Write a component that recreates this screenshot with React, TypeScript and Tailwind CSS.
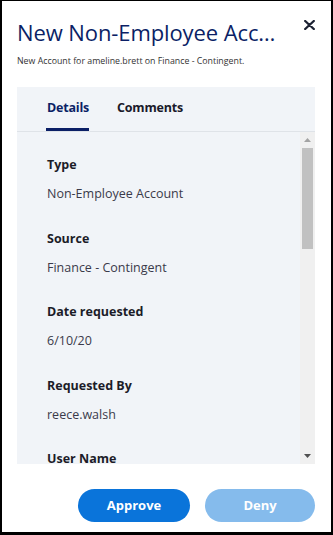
import React from "react";

const items = [
  { label: "Type", value: "Non-Employee Account" },
  { label: "Source", value: "Finance - Contingent" },
  { label: "Date requested", value: "6/10/20" },
  { label: "Requested By", value: "reece.walsh" },
  { label: "User Name", value: "ameline.brett" },
];

export default function App() {
  return (
    <div
      className="w-[333px] h-[535px] bg-white border-black border-l-2 border-r-2 border-t border-b-[3px] flex flex-col overflow-hidden"
      style={{ fontFamily: '"Open Sans", "Noto Sans", Arial, sans-serif' }}
    >
      <div className="flex items-start justify-between pl-[15px] pr-[16px] mt-[17px]">
        <div className="w-[264px] truncate text-[22px] leading-[28px] text-[#0b1f66] tracking-[-0.1px]">
          New Non-Employee Account Request
        </div>
        <svg width="11" height="10" viewBox="0 0 11 10" className="mt-[2px]">
          <path d="M1.2 1 L9.8 9 M9.8 1 L1.2 9" stroke="#1c2233" strokeWidth="2.3" strokeLinecap="round" />
        </svg>
      </div>
      <div className="pl-[15px] mt-[9px] text-[8.8px] leading-[12px] text-[#333]">
        New Account for ameline.brett on Finance - Contingent.
      </div>
      <div className="ml-[15px] mr-[16px] mt-[20px] h-[377px] bg-[#f1f4f8] flex flex-col">
        <div className="flex gap-[28px] pl-[30px] border-b border-[#dfe3e8] h-[45px]">
          <div className="flex flex-col pt-[11px]">
            <div className="text-[12.5px] leading-[20px] font-bold text-[#0b1f66] tracking-[-0.2px]">Details</div>
            <div className="mt-auto h-[3px] bg-[#0b1f66] -ml-[1px]"></div>
          </div>
          <div className="flex flex-col pt-[11px]">
            <div className="text-[12.5px] leading-[20px] font-bold text-[#1a1a2a] tracking-[-0.2px]">Comments</div>
          </div>
        </div>
        <div className="flex flex-1 min-h-0">
          <div className="flex-1 overflow-hidden pl-[30px] pt-[23px] flex flex-col gap-[24.5px]">
            {items.map((it) => (
              <div key={it.label} className="flex flex-col">
                <div className="text-[12.5px] leading-[20px] font-bold text-[#1c1c28]">{it.label}</div>
                <div className="mt-[9px] text-[12.5px] leading-[20px] text-[#3a3a4a]">{it.value}</div>
              </div>
            ))}
          </div>
          <div className="w-[15px] bg-[#f0f0f0] flex flex-col">
            <div className="h-[16px] flex items-center justify-center">
              <svg width="7" height="4" viewBox="0 0 7 4">
                <path d="M0 4 L3.5 0 L7 4 Z" fill="#a3a3a3" />
              </svg>
            </div>
            <div className="mx-[2px] h-[101px] bg-[#c1c1c1]"></div>
            <div className="flex-1"></div>
            <div className="h-[16px] flex items-center justify-center">
              <svg width="7" height="4" viewBox="0 0 7 4">
                <path d="M0 0 L7 0 L3.5 4 Z" fill="#505050" />
              </svg>
            </div>
          </div>
        </div>
      </div>
      <div className="flex justify-end gap-[15px] mr-[16px] mt-[25px]">
        <button className="w-[112px] h-[33px] rounded-full bg-[#0a74da] text-white text-[13px] font-bold">
          Approve
        </button>
        <button className="w-[110px] h-[33px] rounded-full bg-[#85bbec] text-white text-[13px] font-bold">
          Deny
        </button>
      </div>
    </div>
  );
}
